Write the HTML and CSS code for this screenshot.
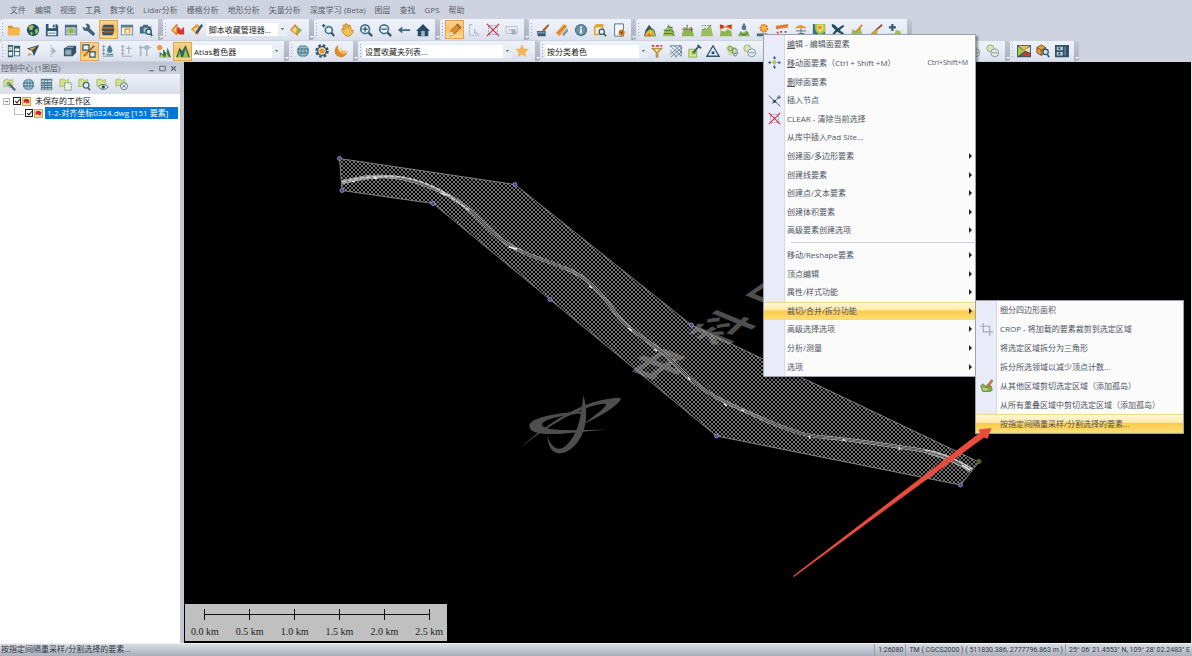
FILE: index.html
```html
<!DOCTYPE html>
<html lang="zh-CN">
<head>
<meta charset="utf-8">
<title>未保存的工作区</title>
<link rel="stylesheet" href="styles.css">
</head>
<body>
<svg class="sprite" aria-hidden="true">
  <defs>
    <symbol id="open" viewBox="0 0 16 16"><path d="M1 3h5l1.500 2H14v9H1z" fill="#d9912b"/><path d="M1 6h14l-1 8H1z" fill="#f3b84c"/></symbol>
    <symbol id="earth" viewBox="0 0 16 16"><circle cx="8" cy="8" r="7" fill="#1f4e66"/><path d="M3 4l4-2 2 2-2 4-3 0zM10 8l3-2 1 4-3 3zM5 10l3 1-1 3-2-1z" fill="#9cc34a"/></symbol>
    <symbol id="save" viewBox="0 0 16 16"><path d="M1 1h12l2 2v12H1z" fill="#2d5870"/><path d="M4 1h8v5H4zM3 9h10v5H3z" fill="#eef3f6"/><path d="M9 2h2v3H9zM4 11h8v1H4z" fill="#2d5870"/></symbol>
    <symbol id="panel" viewBox="0 0 16 16"><path d="M1 2h14v12H1z" fill="#456a7c"/><path d="M2 5h12v8H2z" fill="#e8eef0"/><path d="M5 6h6v6H5z" fill="#8fb64c"/><path d="M3 6h1v6H3zM12 6h1v6h-1z" fill="#456a7c"/></symbol>
    <symbol id="wrench" viewBox="0 0 16 16"><path d="M1 4l3 2 2-2-2-3c4-1 6 2 5 5l6 6-2 3-7-6C3 10 0 7 1 4z" fill="#3f6477"/></symbol>
    <symbol id="layers" viewBox="0 0 16 16"><path d="M3 2h11l1 3H1zM1 6h14v3H1zM1 10h14l-2 4H2z" fill="#335266"/><path d="M3 5h12v2H3zM3 9h12v2H3z" fill="#a5602a"/></symbol>
    <symbol id="layout" viewBox="0 0 16 16"><path d="M1 2h14v12H1z" fill="#5b7d8d"/><path d="M2 5h12v8H2z" fill="#f3f5ec"/><path d="M5 6h7v6H5z" fill="#e2a343"/><path d="M7 8h3v3H7z" fill="#fff"/></symbol>
    <symbol id="camera" viewBox="0 0 16 16"><path d="M1 4h3l1-2h5l1 2h3v8H1z" fill="#456b82"/><circle cx="8" cy="8" r="3" fill="#a9c2cd"/><circle cx="11" cy="10" r="3" fill="#dce8ee" stroke="#315469" stroke-width="1.500"/><path d="M13 12l2 3" stroke="#315469" stroke-width="2"/></symbol>
    <symbol id="tagred" viewBox="0 0 16 16"><path d="M0 8l6-7 2 1-1 5 2 5-3 2z" fill="#d98b2c"/><path d="M2 8l4-4v7z" fill="#f5ce77"/><path d="M7 5h3v2h3V5h2v8h-5l-3-2z" fill="#d63636"/></symbol>
    <symbol id="tagedit" viewBox="0 0 16 16"><path d="M1 7l7-6 5 4-4 9z" fill="#e19a3b"/><path d="M4 7l5-3 1 3-3 4z" fill="#f7d88d"/><path d="M13 1l2 2-6 8-3 2 1-4z" fill="#35586b"/></symbol>
    <symbol id="tagplay" viewBox="0 0 16 16"><path d="M1 8l6-7 4 5-1 9z" fill="#da8e2e"/><path d="M3 8l4-4 2 3-1 5z" fill="#f9d583"/><path d="M9 4l6 4-5 5z" fill="#89b64b"/></symbol>
    <symbol id="zoombox" viewBox="0 0 16 16"><path d="M1 3h4M3 1v4" stroke="#2e5265" stroke-width="1.300"/><circle cx="9" cy="8" r="4" fill="#eaf4f7" stroke="#4a7890" stroke-width="2"/><path d="M12 11l3 4" stroke="#345568" stroke-width="2.500"/></symbol>
    <symbol id="hand" viewBox="0 0 16 16"><path d="M2 7l2-1 1 2-2-5 2-1 2 4-1-5 2 0 2 5 0-4 2 1 1 6 2-1 0 3-4 4H7L3 11z" fill="#f2c34c" stroke="#b87720" stroke-width=".8"/></symbol>
    <symbol id="zin" viewBox="0 0 16 16"><circle cx="7" cy="7" r="5" fill="#e9f4f8" stroke="#45758e" stroke-width="2"/><path d="M4 7h6M7 4v6" stroke="#2d5369" stroke-width="1.400"/><path d="M11 11l4 4" stroke="#345568" stroke-width="2.500"/></symbol>
    <symbol id="zout" viewBox="0 0 16 16"><circle cx="7" cy="7" r="5" fill="#e9f4f8" stroke="#45758e" stroke-width="2"/><path d="M4 7h6" stroke="#2d5369" stroke-width="1.400"/><path d="M11 11l4 4" stroke="#345568" stroke-width="2.500"/></symbol>
    <symbol id="back" viewBox="0 0 16 16"><path d="M1 8l5-4v3h9v2H6v3z" fill="#426b80"/></symbol>
    <symbol id="home" viewBox="0 0 16 16"><path d="M0 9l8-8 8 8h-2v6H2V9z" fill="#244b63"/><path d="M6 9h4v6H6z" fill="#9db5c1"/></symbol>
    <symbol id="pencil" viewBox="0 0 16 16"><path d="M3 9L11 1l4 4-8 8-5 2z" fill="#e18b2d" stroke="#6a4d2f" stroke-width=".8"/><path d="M3 9l4 4-6 2z" fill="#f4e3bd"/><path d="M10 2l4 4" stroke="#6a4d2f"/></symbol>
    <symbol id="vertexsel" viewBox="0 0 16 16"><path d="M3 2v12h11" fill="none" stroke="#9aa3ad" stroke-dasharray="2 1"/><path d="M3 2h3M9 7v5l2-1 2 2" fill="none" stroke="#9aa3ad"/></symbol>
    <symbol id="xred" viewBox="0 0 16 16"><path d="M3 3h10v10H3z" fill="none" stroke="#8792a0" stroke-dasharray="2 1"/><path d="M1 1l14 14M15 1L1 15" stroke="#d0344f" stroke-width="1.500"/></symbol>
    <symbol id="boxsel" viewBox="0 0 16 16"><path d="M1 4h13v8H1z" fill="none" stroke="#9ca5b0" stroke-dasharray="2 1"/><path d="M7 7h5v6H8z" fill="#a5adb7"/><path d="M4 8h3" stroke="#9ca5b0"/></symbol>
    <symbol id="brush" viewBox="0 0 16 16"><path d="M7 8l7-7 1 2-6 7z" fill="#a5622b"/><path d="M1 9h10v6H2z" fill="#385d70"/><path d="M2 10h8v2H2z" fill="#7b98a5"/></symbol>
    <symbol id="ruler" viewBox="0 0 16 16"><path d="M1 11L10 1l4 3-9 11z" fill="#ec9b37"/><path d="M3 12L12 3" stroke="#a75a22"/><path d="M8 13l6-7 1 3-5 6z" fill="#7c93a0"/></symbol>
    <symbol id="info" viewBox="0 0 16 16"><circle cx="8" cy="8" r="7" fill="#477287"/><circle cx="8" cy="8" r="5.500" fill="#6f93a4"/><path d="M7 7h2v5H7zM7 4h2v2H7z" fill="#fff"/></symbol>
    <symbol id="finddoc" viewBox="0 0 16 16"><path d="M1 4l3-3h8v13H1z" fill="#e4a43e"/><path d="M3 5h7v7H3z" fill="#fff2ce"/><circle cx="10" cy="10" r="3" fill="#e6f1f5" stroke="#39627a" stroke-width="1.500"/><path d="M12 12l3 3" stroke="#39627a" stroke-width="2"/></symbol>
    <symbol id="docgear" viewBox="0 0 16 16"><path d="M3 1h10v14H3z" fill="#f7fafc" stroke="#49687a"/><circle cx="11" cy="11" r="3.500" fill="#d17b22"/><circle cx="11" cy="11" r="1.300" fill="#734513"/></symbol>
    <symbol id="t1" viewBox="0 0 16 16"><path d="M1 15l2-7 4-6 3 4 3 2 2 7z" fill="#34584c"/><path d="M2 15l2-5 4-3 4 1 3 7z" fill="#9bb748"/><path d="M2 15l2-4 4-4 3 4-3 4z" fill="#f4b73f"/><path d="M3 15l4-4 3 4z" fill="#e36e30"/></symbol>
    <symbol id="t2" viewBox="0 0 16 16"><path d="M1 15l2-7 4-5 5 2 3 10z" fill="#a3bf5a"/><path d="M2 8l4 1 4-1 4 3M2 12l5 0 4 0 3 2M7 2l1 3 4 0" fill="none" stroke="#2e6352"/></symbol>
    <symbol id="t3" viewBox="0 0 16 16"><path d="M1 15l1-6 4-4 2 3 4-4 3 11z" fill="#91b54a"/><path d="M1 7h13M7 2v4M12 5v5" stroke="#326072"/><circle cx="4" cy="6" r="1.300" fill="#e48a2d"/><circle cx="11" cy="6" r="1.300" fill="#e48a2d"/></symbol>
    <symbol id="t4" viewBox="0 0 16 16"><path d="M1 15l1-7 3-2 3 1 4-5 3 13z" fill="#9fbd5c"/><path d="M2 3h12M2 8l3-2 3 1 4-5" fill="none" stroke="#668064" stroke-dasharray="2 1"/></symbol>
    <symbol id="t5" viewBox="0 0 16 16"><path d="M1 15l1-7 4 2 4-3 4 2 1 6z" fill="#92b548"/><path d="M1 1l7 3 7-3v7l-7-3-7 3z" fill="#e98b45"/><circle cx="3" cy="4" r="2" fill="#c43028"/><path d="M8 3l6-1v4z" fill="#c02d25"/></symbol>
    <symbol id="t6" viewBox="0 0 16 16"><path d="M1 15l3-6 3 2 4-3 4 7z" fill="#8bb44a"/><path d="M8 0c4 5 3 8 0 8s-4-3 0-8z" fill="#4c7c91"/><path d="M4 12l4 2 5-3" stroke="#315e6d" fill="none"/></symbol>
    <symbol id="t7" viewBox="0 0 16 16"><circle cx="9" cy="6" r="4" fill="#f6b343" stroke="#d97922" stroke-dasharray="2 1" stroke-width="2"/><path d="M1 12h12v3H1z" fill="#4a6b74"/></symbol>
    <symbol id="t8" viewBox="0 0 16 16"><path d="M1 3l14-2v4L1 7z" fill="#e77b35"/><path d="M2 10h2v2H2zM6 9h2v2H6zM11 9h2v2h-2zM4 13h2v1H4z" fill="#b63434"/></symbol>
    <symbol id="t9" viewBox="0 0 16 16"><path d="M1 6c5-6 9-4 14 0z" fill="#e79a3d"/><path d="M2 9h12M5 12h7M8 6v7" stroke="#4d6770"/></symbol>
    <symbol id="t10" viewBox="0 0 16 16"><path d="M1 1h14v14H1z" fill="#367183"/><path d="M3 1h12v9l-6 4-5-5z" fill="#a9c44a"/><path d="M6 2h7v6l-4 3-3-4z" fill="#f3d45a"/><circle cx="9" cy="5" r="2" fill="#e58a35"/></symbol>
    <symbol id="plane" viewBox="0 0 16 16"><path d="M1 1l3 1 4 4 6-4 1 2-5 4 5 4-2 1-6-3-4 4-2-1 4-5-4-4z" fill="#244d67"/></symbol>
    <symbol id="t12" viewBox="0 0 16 16"><path d="M1 14l2-7 4 2 5-5 2 10z" fill="#9dbd56"/><path d="M6 11l8-9" stroke="#da872d" stroke-width="2"/></symbol>
    <symbol id="t13" viewBox="0 0 16 16"><path d="M2 12l4-3 5 4-4 2z" fill="#87aa43"/><path d="M7 9l8-7" stroke="#8b552d" stroke-width="2"/><path d="M4 10l4-3 2 3-4 4z" fill="#e19a35"/></symbol>
    <symbol id="t14" viewBox="0 0 16 16"><path d="M7 15l2-7 5 1 2 6z" fill="#9fbe58"/><path d="M1 5h8M5 1v8" stroke="#345b72" stroke-width="2.500"/><path d="M1 13h7" stroke="#345b72"/></symbol>
    <symbol id="catalog" viewBox="0 0 16 16"><path d="M1 1h6v14H1zM8 2h7v12H8z" fill="#345e72"/><path d="M2 3h4v4H2zM2 9h4v4H2zM9 5h5v3H9zM9 9h5v4H9z" fill="#eef3f3"/><path d="M3 4h2v2H3z" fill="#89b24b"/></symbol>
    <symbol id="nav" viewBox="0 0 16 16"><path d="M1 5l14-4-6 13-2-6z" fill="#304f5e"/><path d="M4 5l8-2-5 4z" fill="#efa840"/><path d="M3 10l4 2-5 2z" fill="#e5a03b"/></symbol>
    <symbol id="arrowgray" viewBox="0 0 16 16"><path d="M7 1v14" stroke="#9faab4" stroke-dasharray="2 1"/><path d="M8 4l5 4-5 4z" fill="#adb6be"/></symbol>
    <symbol id="cube" viewBox="0 0 16 16"><path d="M1 5l5-3h9v8l-4 4H1z" fill="#315266"/><path d="M2 6h8v7H2z" fill="#55788a"/><path d="M3 7h6v5H3z" fill="#9bb0b9"/><path d="M3 4h8l2-1H6z" fill="#d9e4e8"/></symbol>
    <symbol id="percent" viewBox="0 0 16 16"><path d="M1 1h7v6H1zM9 9h6v6H9z" fill="#e6eef0" stroke="#345769" stroke-width="1.400"/><path d="M2 14L14 2" stroke="#754b25" stroke-width="1.500"/><path d="M3 10h3v3H3z" fill="#d9852b"/></symbol>
    <symbol id="water" viewBox="0 0 16 16"><path d="M3 1v12M1 3h4M1 7h4M1 11h4M2 14h12" stroke="#789aa9"/><path d="M10 1c5 6 3 9 0 9s-5-3 0-9z" fill="#4c8491"/><path d="M6 12h8" stroke="#5aa09b" stroke-width="2"/></symbol>
    <symbol id="watergray" viewBox="0 0 16 16"><path d="M3 1v12M1 3h4M1 7h4M1 11h4M2 14h12M10 2v9M7 5h6" stroke="#a6b2bd" stroke-width="1.300"/></symbol>
    <symbol id="treegray" viewBox="0 0 16 16"><path d="M3 2v12M1 4h5M6 4h9M10 3v11" stroke="#a7b4be" stroke-width="1.800"/><circle cx="10" cy="4" r="3" fill="#a8bac5"/></symbol>
    <symbol id="sunhill" viewBox="0 0 16 16"><circle cx="3" cy="4" r="3" fill="#ef963f"/><path d="M3 15V9l4 3V6l4 5 1-7 4 11z" fill="#376f53"/><path d="M3 15l2-4 3 4zM9 15l2-5 3 5z" fill="#b9cd50"/></symbol>
    <symbol id="hills" viewBox="0 0 16 16"><path d="M0 15l4-11 3 4 4-7 5 14z" fill="#2b6757"/><path d="M2 15l2-7 2 7zM8 15l3-10 3 10z" fill="#9ac34f"/></symbol>
    <symbol id="globe" viewBox="0 0 16 16"><circle cx="8" cy="8" r="7" fill="#4c7f94"/><path d="M1 8h14M3 4h10M3 12h10M8 1v14M8 1C3 5 3 11 8 15M8 1c5 4 5 10 0 14" fill="none" stroke="#b6d0d9" stroke-width=".8"/></symbol>
    <symbol id="gear" viewBox="0 0 16 16"><circle cx="8" cy="8" r="6.500" fill="none" stroke="#335569" stroke-width="2.500" stroke-dasharray="3 2.100"/><circle cx="8" cy="8" r="5" fill="#f6e7be" stroke="#335569" stroke-width="1.600"/><circle cx="8" cy="8" r="3" fill="#e79538"/></symbol>
    <symbol id="moon" viewBox="0 0 16 16"><path d="M5 1C-2 5 0 15 8 15c4 0 7-3 7-7-3 6-12 2-10-7z" fill="#df8d28"/><path d="M10 2c-3 2-2 6 2 6l3-2-3 5C7 11 5 5 10 2z" fill="#f4ba4c"/></symbol>
    <symbol id="star" viewBox="0 0 16 16"><path d="M8 0l2.300 5.200 5.700.6-4.300 3.800L13 15l-5-3-5 3 1.300-5.400L0 5.800l5.700-.6z" fill="#f1b659"/></symbol>
    <symbol id="filter" viewBox="0 0 16 16"><path d="M2 5h12l-5 5v5H7v-5z" fill="#d9a93c" stroke="#9b702a" stroke-width=".8"/><path d="M2 1h3v2H2zM7 1h3v2H7zM12 1h2v2h-2z" fill="#cf3b31"/><path d="M6 6h4l-2 3z" fill="#fff1b7"/></symbol>
    <symbol id="mesh" viewBox="0 0 16 16"><path d="M1 2l13 12M1 7l8 8M6 2l9 8M11 2l4 3M1 12l12-10M2 15L15 4M7 15l8-7M1 2h13v12" fill="none" stroke="#577485" stroke-width=".9"/></symbol>
    <symbol id="picker" viewBox="0 0 16 16"><path d="M1 6h9v9H1z" fill="#d8e8a3" stroke="#86a848"/><path d="M4 8h5v4H4z" fill="#94b84c"/><path d="M6 10l6-7M11 1l4 4" stroke="#31566b" stroke-width="2"/></symbol>
    <symbol id="tri" viewBox="0 0 16 16"><path d="M8 2l7 12H1z" fill="none" stroke="#31546a" stroke-width="1.500"/><circle cx="8" cy="10" r="1.800" fill="#31546a"/></symbol>
    <symbol id="linkeye" viewBox="0 0 16 16"><path d="M1 4l4-3 3 2 4 0 1 8-8 2z" fill="#c8d996"/><circle cx="6" cy="5" r="2.500" fill="none" stroke="#779050"/><circle cx="11" cy="8" r="3" fill="none" stroke="#536f82"/><path d="M9 12l3 2 3-4" stroke="#536f82" fill="none"/></symbol>
    <symbol id="linkoff" viewBox="0 0 16 16"><circle cx="5" cy="5" r="4" fill="#d6e3b2" stroke="#96ab73"/><circle cx="10" cy="10" r="4.500" fill="#e7ebee" stroke="#7c8e98"/><path d="M7 10h6" stroke="#7c8e98"/></symbol>
    <symbol id="mapimg" viewBox="0 0 16 16"><path d="M0 1h16v14H0z" fill="#34566a"/><path d="M1 2h14L8 7z" fill="#f2b657"/><path d="M1 3l8 5-8 6z" fill="#a9c947"/><path d="M15 3v7L8 7z" fill="#f5e1aa"/><path d="M15 11v3H4l5-5z" fill="#cc3b2d"/></symbol>
    <symbol id="cubefind" viewBox="0 0 16 16"><path d="M1 4l5-3 5 3v6l-5 3-5-3z" fill="#e89d3b" stroke="#714a22"/><path d="M1 4l5 3 5-3M6 7v6" fill="none" stroke="#714a22"/><circle cx="11" cy="9" r="3" fill="#d9e9ef" stroke="#345e74" stroke-width="1.500"/><path d="M13 12l2 3" stroke="#345e74" stroke-width="2"/></symbol>
    <symbol id="sheet" viewBox="0 0 16 16"><path d="M0 1h16v14H0z" fill="#345267"/><path d="M2 3h7v4H2zM2 9h7v4H2z" fill="#b7c9d2"/><circle cx="5" cy="5" r="1.300" fill="#345267"/><circle cx="5" cy="11" r="1.300" fill="#345267"/><path d="M11 3h1v10h-1z" fill="#8ba2ae"/></symbol>
    <symbol id="ltool" viewBox="0 0 16 16"><path d="M1 3l4-2 3 2 4-1v8l-4 2-3-2-4 1z" fill="#cfdf91" stroke="#a8bb62"/><circle cx="7" cy="7" r="2.500" fill="#7d9caa"/><path d="M8 8l7 7" stroke="#3e6375" stroke-width="2.500"/></symbol>
    <symbol id="grid" viewBox="0 0 16 16"><path d="M1 1h14v14H1z" fill="#547b8c"/><path d="M2 3h3v2H2zM6 3h3v2H6zM10 3h4v2h-4zM2 7h3v1H2zM6 7h3v1H6zM10 7h4v1h-4zM2 10h3v1H2zM6 10h3v1H6zM10 10h4v1h-4zM2 13h3v1H2zM6 13h3v1H6zM10 13h4v1h-4z" fill="#dce8ea"/></symbol>
    <symbol id="lsel" viewBox="0 0 16 16"><path d="M1 2l4-1 3 2 4-1v8l-4 1-3-1-4 1z" fill="#d2df91" stroke="#a8bb62"/><path d="M7 6h8v9H7z" fill="#edf2df" stroke="#58798a" stroke-dasharray="2 1"/></symbol>
    <symbol id="lfind" viewBox="0 0 16 16"><path d="M1 2l4-1 3 2 4-1v8l-4 1-3-1-4 1z" fill="#d2df91" stroke="#a8bb62"/><circle cx="10" cy="9" r="3.500" fill="#dfecf0" stroke="#45697b" stroke-width="1.500"/><path d="M12 12l3 3" stroke="#45697b" stroke-width="2"/></symbol>
    <symbol id="leye" viewBox="0 0 16 16"><path d="M1 2l4-1 3 2 4-1v6l-4 2-3-1-4 1z" fill="#d2df91" stroke="#a8bb62"/><path d="M3 11c4-4 8-4 12 0-4 4-8 4-12 0z" fill="#fff" stroke="#315063"/><circle cx="9" cy="11" r="2.200" fill="#315063"/></symbol>
    <symbol id="lx" viewBox="0 0 16 16"><path d="M1 2l4-1 3 2 4-1v6l-4 2-3-1-4 1z" fill="#d2df91" stroke="#a8bb62"/><circle cx="11" cy="10" r="4.300" fill="#f5f7f8" stroke="#415e70"/><path d="M9 8l4 4M13 8l-4 4" stroke="#415e70"/></symbol>
    <symbol id="file" viewBox="0 0 16 16"><path d="M0 0h16v16H0z" fill="#d9ab22"/><path d="M2 2h12v12H2z" fill="#fbe9c6"/><path d="M3 5c5-3 8-2 10 2l-2 0 2 5-3-2-1 3-2-4-4 2z" fill="#cf272d"/><path d="M9 5l4 1v4z" fill="#552070"/></symbol>
    <symbol id="move" viewBox="0 0 16 16"><path d="M8 0l2 3H6zM8 16l2-3H6zM0 8l3-2v4zM16 8l-3-2v4z" fill="#29495c"/><path d="M8 3v10M3 8h10" stroke="#29495c" stroke-dasharray="1 1"/><circle cx="8" cy="8" r="2.500" fill="#bccc4b"/></symbol>
    <symbol id="insert" viewBox="0 0 16 16"><path d="M1 2l14 13M5 12L12 5M11 4h5M13.500 1.500v5" stroke="#465c6b" stroke-width="1.200"/><circle cx="8" cy="9" r="2" fill="#344f61"/></symbol>
    <symbol id="crop" viewBox="0 0 16 16"><path d="M4 0v11h12M0 4h12v12" fill="none" stroke="#a2a8b3" stroke-width="1.500"/></symbol>
    <symbol id="cutarea" viewBox="0 0 16 16"><path d="M1 8l3-2 3 3 3-2 4 2 1 5-5 2-7-1z" fill="#85b548" stroke="#4d8435"/><path d="M7 10l7-9 2 1-6 9z" fill="#d87b35" stroke="#765035" stroke-width=".6"/><path d="M3 11h6v3H4z" fill="#b8d391"/></symbol>
  </defs>
</svg>

<nav class="menubar" aria-label="主菜单">
  <button>文件</button><button>编辑</button><button>视图</button><button>工具</button><button>数字化</button><button>Lidar分析</button><button>栅格分析</button><button>地形分析</button><button>矢量分析</button><button>深度学习 (Beta)</button><button>图层</button><button>查找</button><button>GPS</button><button>帮助</button>
</nav>

<div class="toolrow">
  <div class="group g-file" role="toolbar" aria-label="文件"><i class="grip"></i>
    <button class="tool" aria-label="打开"><svg><use href="#open"/></svg></button>
    <button class="tool" aria-label="在线数据"><svg><use href="#earth"/></svg></button>
    <button class="tool" aria-label="保存"><svg><use href="#save"/></svg></button>
    <button class="tool" aria-label="布局"><svg><use href="#panel"/></svg></button>
    <button class="tool" aria-label="配置"><svg><use href="#wrench"/></svg></button>
    <button class="tool on" aria-label="控制中心"><svg><use href="#layers"/></svg></button>
    <button class="tool" aria-label="地图布局"><svg><use href="#layout"/></svg></button>
    <button class="tool" aria-label="截图"><svg><use href="#camera"/></svg></button>
    <i class="cap"></i></div>
  <div class="group g-script" role="toolbar" aria-label="脚本"><i class="grip"></i>
    <button class="tool" aria-label="停止脚本"><svg><use href="#tagred"/></svg></button>
    <button class="tool" aria-label="编辑脚本"><svg><use href="#tagedit"/></svg></button>
    <span class="combo c-script"><select aria-label="脚本收藏"><option>脚本收藏管理器...</option></select></span>
    <button class="tool" aria-label="运行脚本"><svg><use href="#tagplay"/></svg></button>
    <i class="cap"></i></div>
  <div class="group g-view" role="toolbar" aria-label="视图"><i class="grip"></i>
    <button class="tool" aria-label="框选缩放"><svg><use href="#zoombox"/></svg></button>
    <button class="tool" aria-label="平移"><svg><use href="#hand"/></svg></button>
    <button class="tool" aria-label="放大"><svg><use href="#zin"/></svg></button>
    <button class="tool" aria-label="缩小"><svg><use href="#zout"/></svg></button>
    <button class="tool" aria-label="上一视图"><svg><use href="#back"/></svg></button>
    <button class="tool" aria-label="全图"><svg><use href="#home"/></svg></button>
    <i class="cap"></i></div>
  <div class="group g-edit" role="toolbar" aria-label="编辑"><i class="grip"></i>
    <button class="tool on" aria-label="数字化"><svg><use href="#pencil"/></svg></button>
    <button class="tool" aria-label="选择顶点"><svg><use href="#vertexsel"/></svg></button>
    <button class="tool" aria-label="清除选择"><svg><use href="#xred"/></svg></button>
    <button class="tool" aria-label="选择框"><svg><use href="#boxsel"/></svg></button>
    <i class="cap"></i></div>
  <div class="group g-info" role="toolbar" aria-label="信息"><i class="grip"></i>
    <button class="tool" aria-label="画笔"><svg><use href="#brush"/></svg></button>
    <button class="tool" aria-label="测量"><svg><use href="#ruler"/></svg></button>
    <button class="tool" aria-label="信息"><svg><use href="#info"/></svg></button>
    <button class="tool" aria-label="查找"><svg><use href="#finddoc"/></svg></button>
    <button class="tool" aria-label="属性"><svg><use href="#docgear"/></svg></button>
    <i class="cap"></i></div>
  <div class="group g-terrain" role="toolbar" aria-label="地形"><i class="grip"></i>
    <button class="tool" aria-label="高程网格"><svg><use href="#t1"/></svg></button>
    <button class="tool" aria-label="等高线"><svg><use href="#t2"/></svg></button>
    <button class="tool" aria-label="剖面"><svg><use href="#t3"/></svg></button>
    <button class="tool" aria-label="地形比较"><svg><use href="#t4"/></svg></button>
    <button class="tool" aria-label="视域"><svg><use href="#t5"/></svg></button>
    <button class="tool" aria-label="水域"><svg><use href="#t6"/></svg></button>
    <button class="tool" aria-label="日照"><svg><use href="#t7"/></svg></button>
    <button class="tool" aria-label="压平"><svg><use href="#t8"/></svg></button>
    <button class="tool" aria-label="填挖方"><svg><use href="#t9"/></svg></button>
    <button class="tool" aria-label="热力图"><svg><use href="#t10"/></svg></button>
    <button class="tool" aria-label="飞行"><svg><use href="#plane"/></svg></button>
    <button class="tool" aria-label="地形编辑"><svg><use href="#t12"/></svg></button>
    <button class="tool" aria-label="地形绘制"><svg><use href="#t13"/></svg></button>
    <button class="tool" aria-label="添加地形"><svg><use href="#t14"/></svg></button>
    <i class="cap"></i></div>
</div>

<div class="toolrow">
  <div class="group g-3d" role="toolbar" aria-label="三维"><i class="grip"></i>
    <button class="tool" aria-label="目录"><svg><use href="#catalog"/></svg></button>
    <button class="tool" aria-label="导航"><svg><use href="#nav"/></svg></button>
    <button class="tool" aria-label="剖面方向"><svg><use href="#arrowgray"/></svg></button>
    <button class="tool" aria-label="三维视图"><svg><use href="#cube"/></svg></button>
    <button class="tool on" aria-label="链接视图"><svg><use href="#percent"/></svg></button>
    <button class="tool" aria-label="水位"><svg><use href="#water"/></svg></button>
    <button class="tool" aria-label="水位降低"><svg><use href="#watergray"/></svg></button>
    <button class="tool" aria-label="植被"><svg><use href="#treegray"/></svg></button>
    <button class="tool" aria-label="光照"><svg><use href="#sunhill"/></svg></button>
    <button class="tool on" aria-label="山体阴影"><svg><use href="#hills"/></svg></button>
    <span class="combo c-shader"><select aria-label="着色器"><option>Atlas着色器</option></select></span>
    <i class="cap"></i></div>
  <div class="group g-sky" role="toolbar" aria-label="天空"><i class="grip"></i>
    <button class="tool" aria-label="地球"><svg><use href="#globe"/></svg></button>
    <button class="tool" aria-label="设置"><svg><use href="#gear"/></svg></button>
    <button class="tool" aria-label="夜间"><svg><use href="#moon"/></svg></button>
    <i class="cap"></i></div>
  <div class="group g-fav" role="toolbar" aria-label="收藏"><i class="grip"></i>
    <span class="combo c-fav"><select aria-label="收藏夹"><option>设置收藏夹列表...</option></select></span>
    <button class="tool" aria-label="收藏"><svg><use href="#star"/></svg></button>
    <i class="cap"></i></div>
  <div class="group g-lidar" role="toolbar" aria-label="点云"><i class="grip"></i>
    <span class="combo c-color"><select aria-label="着色方式"><option>按分类着色</option></select></span>
    <button class="tool" aria-label="过滤"><svg><use href="#filter"/></svg></button>
    <button class="tool" aria-label="网格"><svg><use href="#mesh"/></svg></button>
    <button class="tool" aria-label="拾取"><svg><use href="#picker"/></svg></button>
    <button class="tool" aria-label="三角网"><svg><use href="#tri"/></svg></button>
    <button class="tool" aria-label="分类"><svg><use href="#linkeye"/></svg></button>
    <button class="tool" aria-label="取消分类"><svg><use href="#linkoff"/></svg></button>
    <button class="tool" aria-label="地面点"><svg><use href="#t3"/></svg></button>
    <button class="tool" aria-label="建筑"><svg><use href="#cube"/></svg></button>
    <button class="tool" aria-label="树木"><svg><use href="#treegray"/></svg></button>
    <button class="tool" aria-label="水体"><svg><use href="#water"/></svg></button>
    <button class="tool" aria-label="噪点"><svg><use href="#mesh"/></svg></button>
    <button class="tool" aria-label="路径"><svg><use href="#t4"/></svg></button>
    <button class="tool" aria-label="查询"><svg><use href="#lfind"/></svg></button>
    <button class="tool" aria-label="显示"><svg><use href="#leye"/></svg></button>
    <button class="tool" aria-label="选择"><svg><use href="#lsel"/></svg></button>
    <button class="tool" aria-label="清除"><svg><use href="#lx"/></svg></button>
    <button class="tool" aria-label="合并"><svg><use href="#linkeye"/></svg></button>
    <button class="tool" aria-label="隐藏"><svg><use href="#linkoff"/></svg></button>
    <button class="tool" aria-label="移除"><svg><use href="#linkoff"/></svg></button>
    <i class="cap"></i></div>
  <div class="group g-img" role="toolbar" aria-label="影像"><i class="grip"></i>
    <button class="tool" aria-label="影像"><svg><use href="#mapimg"/></svg></button>
    <button class="tool" aria-label="模型查找"><svg><use href="#cubefind"/></svg></button>
    <button class="tool" aria-label="图表"><svg><use href="#sheet"/></svg></button>
    <i class="cap"></i></div>
</div>

<main class="work">
  <aside class="side">
    <header class="side-title"><h1>控制中心 (1图层)</h1>
      <button aria-label="最小化"><svg viewBox="0 0 8 8"><path d="M2 6h4" stroke="#5f6470"/></svg></button>
      <button aria-label="浮动"><svg viewBox="0 0 8 8"><path d="M1.500 2h5v4h-5z" fill="none" stroke="#5f6470" stroke-width=".8"/></svg></button>
      <button aria-label="关闭"><svg viewBox="0 0 8 8"><path d="M2 2l4 4M6 2L2 6" stroke="#5f6470"/></svg></button>
    </header>
    <div class="side-tools">
      <button class="tool" aria-label="图层选项"><svg><use href="#ltool"/></svg></button>
      <button class="tool" aria-label="投影"><svg><use href="#globe"/></svg></button>
      <button class="tool" aria-label="属性表"><svg><use href="#grid"/></svg></button>
      <button class="tool" aria-label="选择图层"><svg><use href="#lsel"/></svg></button>
      <button class="tool" aria-label="缩放到图层"><svg><use href="#lfind"/></svg></button>
      <button class="tool" aria-label="显示图层"><svg><use href="#leye"/></svg></button>
      <button class="tool" aria-label="关闭图层"><svg><use href="#lx"/></svg></button>
    </div>
    <ul class="tree">
      <li><span class="twig"></span><input type="checkbox" id="ws" checked><svg><use href="#file"/></svg><label for="ws">未保存的工作区</label></li>
      <li class="child"><span class="elbow"></span><input type="checkbox" id="dwg" checked><svg><use href="#file"/></svg><label for="dwg" class="picked">1-2-对齐坐标0324.dwg [151 要素]</label></li>
    </ul>
  </aside>

  <section class="map" aria-label="地图">
    <svg class="canvas">
      <defs>
        <pattern id="hatch" width="4" height="4" patternUnits="userSpaceOnUse"><path d="M-1-1l6 6M-1 5l6-6M-1 3l2 2M3-1l2 2M-1 1l2-2M3 5l2-2" stroke="#a4a4a4" stroke-width=".7"/></pattern>
        <path id="road" d="M342 182Q363 177 373 176.500Q383 176 393 177Q403 178 415 181.500Q427 185 437.500 190Q448 195 457.500 201Q467 207 477 217Q487 227 493.500 233Q500 239 508.500 244.500Q517 250 528.500 254.500Q540 259 551.500 263Q563 267 571.500 271Q580 275 587.500 281Q595 287 604 298Q613 309 618 316Q623 323 633 330.500Q643 338 655 346.500Q667 355 677.500 366.500Q688 378 699 386Q710 394 718.500 398.500Q727 403 735 406.500Q743 410 759.500 417.500Q776 425 786.500 428.500Q797 432 803.500 434Q810 436 826.500 437.500Q843 439 858 441Q873 443 886.500 445Q900 447 913.500 449Q927 451 937 454Q947 457 972 470"/>
      </defs>
      <g transform="translate(-184 -62)">
        <g fill="#4e4e4e" transform="translate(510 270) scale(.333)">
          <path d="M215 424C160 428 58 440 58 468C58 494 110 496 170 490L292 479C220 480 150 484 115 476C78 466 100 450 150 440C180 434 200 432 215 431z"/>
          <path d="M35 532C110 460 230 384 332 384C338 396 290 432 222 462C262 432 300 404 285 402C240 402 130 452 35 532z"/>
          <path d="M220 377C238 430 230 500 185 536C150 562 116 556 112 498C124 534 145 548 168 528C204 495 214 440 220 377z"/>
        </g>
        <g class="mark">
          <text transform="matrix(.82 -.57 .88 .36 658 364)">中</text>
          <text transform="matrix(.82 -.57 .88 .36 720 327)">科</text>
          <text transform="matrix(.82 -.57 .88 .36 778 290)">图</text>
        </g>
        <path d="M339.500 158.500L515 184.500L691.500 325L979 462L960.500 485L716.500 436L550 299.500L433 203.500L342 190.500z" fill="url(#hatch)" stroke="#999" stroke-width=".8"/>
        <g fill="none">
          <use href="#road" stroke="#bdbdbd" stroke-width="3.400"/>
          <use href="#road" stroke="#222" stroke-width="1.900"/>
          <use href="#road" stroke="#ccc" stroke-width=".6"/>
          <path d="M342 182Q372 174 401 177Q426 181 448 195L469 210M925 450Q951 455 972 469" stroke="#ccc" stroke-width="1.600" stroke-dasharray="5 1"/>
          <path d="M342 184Q372 176 398 178M928 454Q951 459 970 472" stroke="#bbb" stroke-width=".8"/>
        </g>
        <path d="M352 181l3 1M374 178h3M440 193l7 2M509 247l8 2M589 286l3 2M628 328l4 3M654 349l3 2M688 377l2 3M724 404l3 2M741 410l3 1M809 436l1 3M843 439l2 2M899 447l1 3M962 465l8 5" stroke="#fff" stroke-width="1.300"/>
        <g fill="#46408f" stroke="#a3a1d6" stroke-width=".8"><circle cx="339.500" cy="158.500" r="2"/><circle cx="515" cy="184.500" r="2"/><circle cx="691.500" cy="325" r="2"/><circle cx="960.500" cy="485" r="2"/><circle cx="716.500" cy="436" r="2"/><circle cx="550" cy="299.500" r="2"/><circle cx="433" cy="203.500" r="2"/><circle cx="342" cy="190.500" r="2"/></g>
        <circle cx="979" cy="461.500" r="2" fill="#963b21" stroke="#31851e"/>
      </g>
    </svg>
    <div class="scale">
      <div class="rule"><i></i><i></i><i></i><i></i><i></i></div>
      <div class="marks"><span>0.0 km</span><span>0.5 km</span><span>1.0 km</span><span>1.5 km</span><span>2.0 km</span><span>2.5 km</span></div>
    </div>
  </section>
</main>

<footer class="status"><span class="hint">按指定间隔重采样/分割选择的要素...</span><span>1:26080</span><span>TM ( CGCS2000 ) ( 511830.386, 2777796.863 m )</span><span>25° 06' 21.4553" N, 109° 28' 02.2483" E</span></footer>

<div class="menu main-menu" role="menu">
  <button role="menuitem"><span><u>编</u>辑 - 编辑面要素</span></button>
  <button role="menuitem"><svg><use href="#move"/></svg><span><u>移</u>动面要素（Ctrl + Shift +M）</span><kbd>Ctrl+Shift+M</kbd></button>
  <button role="menuitem"><span><u>删</u>除面要素</span></button>
  <button role="menuitem"><svg><use href="#insert"/></svg><span>插入节点</span></button>
  <button role="menuitem"><svg><use href="#xred"/></svg><span>CLEAR - 清除当前选择</span></button>
  <button role="menuitem"><span>从库中插入Pad Site...</span></button>
  <button role="menuitem" class="more"><span>创建面/多边形要素</span></button>
  <button role="menuitem" class="more"><span>创建线要素</span></button>
  <button role="menuitem" class="more"><span>创建点/文本要素</span></button>
  <button role="menuitem" class="more"><span>创建体积要素</span></button>
  <button role="menuitem" class="more"><span>高级要素创建选项</span></button>
  <hr>
  <button role="menuitem" class="more"><span>移动/Reshape要素</span></button>
  <button role="menuitem" class="more"><span>顶点编辑</span></button>
  <button role="menuitem" class="more"><span>属性/样式功能</span></button>
  <button role="menuitem" class="more hot"><span>裁切/合并/拆分功能</span></button>
  <button role="menuitem" class="more"><span>高级选择选项</span></button>
  <button role="menuitem" class="more"><span>分析/测量</span></button>
  <button role="menuitem" class="more"><span>选项</span></button>
</div>
<div class="menu sub-menu" role="menu">
  <button role="menuitem"><span>细分四边形面积</span></button>
  <button role="menuitem"><svg><use href="#crop"/></svg><span>CROP - 将加载的要素裁剪到选定区域</span></button>
  <button role="menuitem"><span>将选定区域拆分为三角形</span></button>
  <button role="menuitem"><span>拆分所选领域以减少顶点计数...</span></button>
  <button role="menuitem"><svg><use href="#cutarea"/></svg><span>从其他区域剪切选定区域（添加孤岛）</span></button>
  <button role="menuitem"><span>从所有重叠区域中剪切选定区域（添加孤岛）</span></button>
  <button role="menuitem" class="hot"><span>按指定间隔重采样/分割选择的要素...</span></button>
</div>
<svg class="pointer" viewBox="0 0 200 150" aria-hidden="true"><path d="M0 148L187 4.500L185.500 1.500L198.500 0L194.500 11L191 9.500L.8 149z" fill="#e94b3c"/></svg>
</body>
</html>
```
FILE: styles.css
```css
* { box-sizing: border-box; }
body {
  margin: 0;
  height: 100vh;
  display: flex;
  flex-direction: column;
  position: relative;
  overflow: hidden;
  background: #cfd3df;
  color: #3c4048;
  font: 8px/12px "Open Sans", "Noto Sans CJK SC", sans-serif;
}
button, select, input { font: inherit; color: inherit; margin: 0; }
button { border: 0; background: none; padding: 0; }
.sprite { position: absolute; width: 0; height: 0; }

.menubar { display: flex; gap: 9px; height: 19px; padding: 0 10px; align-items: center; flex: none; color: #5b606b; }
.menubar button { white-space: nowrap; }

.toolrow { display: flex; flex: none; height: 22px; padding-bottom: 1px; }
.toolrow + .toolrow { height: 21px; }
.group {
  display: flex;
  flex: none;
  align-items: center;
  border-radius: 3px;
  background: linear-gradient(#eef1f8, #e8ecf6 50%, #d9dfec);
  overflow: hidden;
}
.g-file { width: 163px; }
.g-script { width: 151px; }
.g-view { width: 126px; }
.g-edit { width: 89px; }
.g-info { width: 107px; }
.g-terrain { width: 276px; }
.g-3d { width: 289px; }
.g-sky { width: 69px; }
.g-fav { width: 182px; }
.g-lidar { width: 470px; }
.g-img { width: 69px; }
.grip {
  flex: none;
  width: 5px;
  height: 14px;
  background: repeating-linear-gradient(#a3a9b8 0 1px, transparent 1px 3px) 2px 0 / 1px 100% no-repeat;
}
.cap {
  flex: none;
  width: 5px;
  margin-left: 3px;
  align-self: stretch;
  background: linear-gradient(#c3c7d2, #a8aebc);
  position: relative;
}
.cap::after {
  content: "";
  position: absolute;
  left: 1px;
  bottom: 2px;
  border: 2px solid transparent;
  border-top-color: #fff;
  border-bottom: 0;
}
.tool { flex: 1 1 0; min-width: 0; height: 19px; display: flex; align-items: center; justify-content: center; }
.tool svg { flex: none; width: 14px; height: 14px; }
.tool.on { background: linear-gradient(#fbd49a, #fdbf62 50%, #fddf93); box-shadow: inset 0 0 0 1px #d9a75b; }
.combo { flex: none; position: relative; height: 13px; background: #fff; display: flex; }
.combo::after {
  content: "";
  position: absolute;
  right: 0;
  top: 0;
  width: 9px;
  height: 13px;
  background: linear-gradient(#777, #777) 3px 5px / 3px 1px no-repeat, linear-gradient(#777, #777) 4px 6px / 1px 1px no-repeat, #e9edf5;
  pointer-events: none;
}
.combo select { appearance: none; border: 0; background: none; width: 100%; padding: 0 2px; line-height: 13px; color: #222; border-radius: 0; }
.c-script { width: 80px; }
.c-shader { width: 89px; }
.c-fav { width: 149px; }
.c-color { width: 103px; }

.work { flex: 1; min-height: 0; display: flex; }
.side { width: 184px; flex: none; display: flex; flex-direction: column; border-right: 4px solid #c3c7cf; background: #fff; }
.side-title { display: flex; align-items: center; gap: 2px; height: 12px; padding: 0 2px 0 1px; background: linear-gradient(#c2c6d2, #cdd1dc); color: #5b606b; }
.side-title h1 { flex: 1; margin: 0; font: inherit; }
.side-title button, .side-title svg { width: 9px; height: 9px; display: block; }
.side-tools { display: flex; height: 20px; padding-right: 49px; align-items: center; background: linear-gradient(#eef1f8, #d9deea); }
.side-tools .tool svg { width: 13px; height: 13px; }
.tree { list-style: none; margin: 0; padding: 1px 2px 0 3px; color: #111; }
.tree li { display: flex; align-items: center; height: 12px; gap: 1px; }
.tree .child { padding-left: 11px; }
.tree svg { width: 9px; height: 9px; flex: none; }
.twig { width: 7px; height: 7px; margin-right: 2px; border: 1px solid #b8b8b8; background: linear-gradient(#777, #777) 1px 2px / 3px 1px no-repeat; }
.elbow { width: 10px; height: 8px; align-self: flex-start; border: solid #bbb; border-width: 0 0 1px 1px; }
.tree input { appearance: none; flex: none; width: 8px; height: 8px; border: 1px solid #222; background: #fff; position: relative; }
.tree input:checked::after { content: ""; position: absolute; left: 2px; top: 0; width: 2px; height: 4px; border: solid #222; border-width: 0 1px 1px 0; transform: rotate(40deg); }
.tree label { padding: 0 2px; margin-left: 1px; white-space: nowrap; }
.tree .picked { flex: 1; background: #0078d7; color: #fff; }

.map { flex: 1; min-width: 0; position: relative; background: #000; border-right: 1px solid #dfe2e8; overflow: hidden; }
.canvas { display: block; width: 100%; height: 100%; }
.mark text { font: bold 48px "Noto Sans CJK SC", sans-serif; text-anchor: middle; dominant-baseline: central; fill: #4e4e4e; }
.scale { position: absolute; left: 1px; bottom: 2px; width: 262px; padding: 5px 0 3px; background: #c0c0c0; color: #222; }
.rule { display: flex; height: 11px; margin: 0 17px 0 19px; border-left: 1px solid #111; background: linear-gradient(#111, #111) 0 5px / 100% 1px no-repeat; }
.rule i { flex: 1; border-right: 1px solid #111; }
.marks { display: flex; justify-content: space-between; padding: 6px 4px 0 6px; font: 10px/12px "Liberation Serif", serif; }

.status { flex: none; display: flex; height: 13px; border-top: 1px solid #eef0f3; background: linear-gradient(#d9dde4, #a9afbb); white-space: nowrap; font-family: Roboto, "Noto Sans CJK SC", sans-serif; font-size: 7px; color: #33373f; }
.status span { padding: 0 2px 0 3px; border-left: 1px solid #989da8; }
.status .hint { flex: 1; padding-left: 1px; border: 0; font-size: 8px; }

.menu { position: absolute; display: flex; flex-direction: column; border: 1px solid #9da1aa; background: linear-gradient(90deg, #e9ecf8 20px, #d5d9e4 20px 21px, #fbfbfc 21px); box-shadow: 2px 2px 2px rgba(0, 0, 0, .4); color: #50545c; }
.main-menu { left: 763px; top: 34px; width: 213px; height: 343px; }
.sub-menu { left: 975px; top: 300px; width: 209px; height: 134px; }
.menu button { flex: 1 1 0; min-height: 0; display: grid; grid-template-columns: 20px 1fr auto; column-gap: 3px; align-items: center; text-align: left; padding-right: 7px; position: relative; white-space: nowrap; }
.menu button span { grid-column: 2; grid-row: 1; }
.menu svg { width: 13px; height: 13px; justify-self: center; grid-column: 1; grid-row: 1; }
.menu kbd { grid-column: 3; font: inherit; font-size: 7px; }
.menu u { text-underline-offset: 1px; }
.menu hr { width: 184px; height: 1px; margin: 2px 0 3px auto; border: 0; background: #cfd1d6; }
.more::after { content: ""; position: absolute; right: 3px; top: 50%; margin-top: -3px; border: 3px solid transparent; border-left-color: #222; border-right: 0; }
.menu .hot { background: linear-gradient(#fff8dc, #ffe9a6 45%, #fdca45 50%, #ffdf7c); box-shadow: inset 0 1px #f0d98e, inset 0 -1px #f0d98e; }
.sub-menu button { column-gap: 4px; }
.pointer { position: absolute; left: 793px; top: 428px; width: 200px; height: 150px; }
```
